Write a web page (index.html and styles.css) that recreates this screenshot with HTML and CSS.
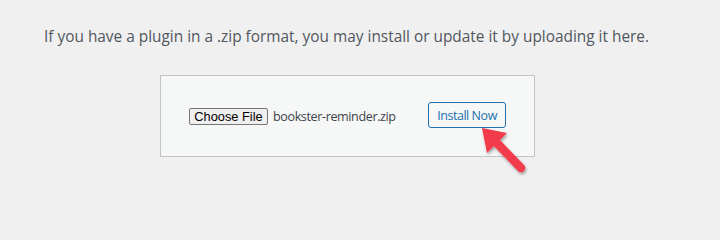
FILE: index.html
```html
<!DOCTYPE html>
<html>
<head>
<meta charset="utf-8">
<link rel="stylesheet" href="styles.css">
</head>
<body>
<div class="page">
  <p class="intro">If you have a plugin in a .zip format, you may install or update it by uploading it here.</p>
  <form class="upload" onsubmit="return false">
    <span class="file-btn">Choose File</span>
    <span class="file-name">bookster-reminder.zip</span>
    <button class="install" type="button">Install Now</button>
    <svg class="arrow" width="60" height="64" viewBox="0 0 60 64">
      <defs>
        <filter id="sh" x="-30%" y="-30%" width="160%" height="160%">
          <feDropShadow dx="1" dy="2" stdDeviation="1.5" flood-color="#000" flood-opacity="0.35"/>
        </filter>
      </defs>
      <g filter="url(#sh)">
        <polygon points="7,8 32,13 24,21 12,33" fill="#f23a4b"/>
        <line x1="20" y1="21" x2="46" y2="48" stroke="#f23a4b" stroke-width="8.5" stroke-linecap="round"/>
      </g>
    </svg>
  </form>
</div>
</body>
</html>
```

FILE: styles.css
```css
html, body {
  margin: 0;
  padding: 0;
  background: #f0f0f1;
}
.page {
  width: 720px;
  height: 220px;
  padding: 26px 0 0 44px;
  box-sizing: border-box;
  font-family: "Open Sans", "Noto Sans", sans-serif;
}
.intro {
  margin: 0;
  font-size: 15.4px;
  line-height: 22px;
  color: #50575e;
}
.upload {
  position: relative;
  margin: 27px 0 0 116px;
  width: 375px;
  height: 82px;
  box-sizing: border-box;
  border: 1px solid #c3c4c7;
  background: #f6f7f7;
  display: flex;
  align-items: center;
  padding: 0 0 0 28px;
}
.file-btn {
  display: inline-flex;
  align-items: center;
  justify-content: center;
  box-sizing: border-box;
  width: 79px;
  height: 17px;
  border: 1px solid #767676;
  border-radius: 2px;
  background: #efefef;
  font-family: "Liberation Sans", Arial, sans-serif;
  font-size: 12.8px;
  color: #000;
  margin-top: 1px;
}
.file-name {
  margin-left: 5px;
  font-size: 12.6px;
  letter-spacing: -0.4px;
  color: #3c434a;
  margin-top: 1px;
}
.install {
  margin-left: auto;
  margin-right: 28px;
  width: 78px;
  height: 26px;
  box-sizing: border-box;
  border: 1px solid #2271b1;
  border-radius: 3px;
  background: #f6f7f7;
  color: #2271b1;
  font-family: "Open Sans", "Noto Sans", sans-serif;
  font-size: 12.5px;
  letter-spacing: -0.45px;
  padding: 0;
  margin-bottom: 2px;
}
.arrow {
  position: absolute;
  left: 314px;
  top: 44px;
}
```
